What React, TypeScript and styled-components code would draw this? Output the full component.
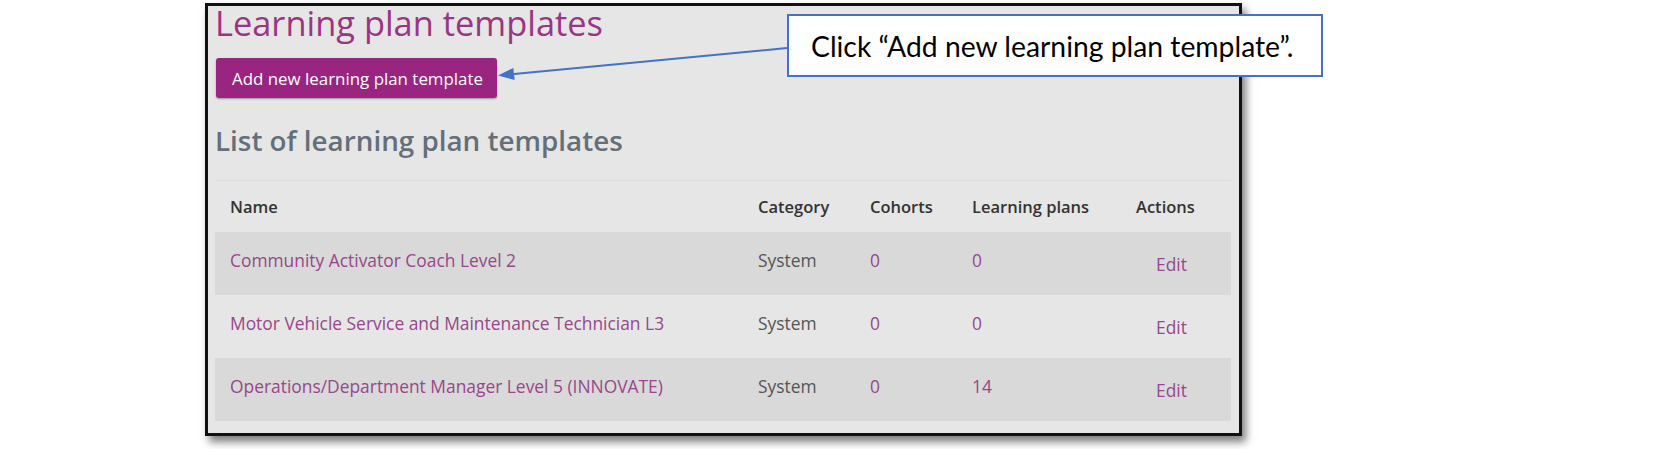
import React from "react";
import styled, { createGlobalStyle } from "styled-components";

const GlobalStyle = createGlobalStyle`
  html, body { margin: 0; padding: 0; background: #ffffff; }
  body { font-family: "Open Sans", "Noto Sans", sans-serif; }
`;

const COLUMNS = "528px 112px 102px 164px 110px";

const Page = styled.div`
  position: relative;
  width: 1654px;
  height: 449px;
  padding: 3px 0 0 205px;
  box-sizing: border-box;
  overflow: hidden;
`;

const Frame = styled.div`
  width: 1037px;
  box-sizing: border-box;
  border: 3px solid #111111;
  background: #e6e6e6;
  box-shadow: 4px 6px 8px rgba(0, 0, 0, 0.5);
  padding: 0 8px 12px 7px;
  display: flex;
  flex-direction: column;
  align-items: flex-start;
`;

const Title = styled.h1`
  margin: 0;
  font-family: "Open Sans", sans-serif;
  font-weight: 400;
  font-size: 34.4px;
  line-height: 34px;
  color: #9b3583;
`;

const PrimaryButton = styled.button`
  display: inline-flex;
  align-items: center;
  height: 40px;
  margin: 18px 0 0 1px;
  padding: 0 14px 0 16px;
  background: #9a2581;
  color: #ffffff;
  border: none;
  border-radius: 3px;
  font-family: "Open Sans", sans-serif;
  font-size: 16.9px;
  box-shadow: 0 1px 2px rgba(0, 0, 0, 0.35);
`;

const SectionHeading = styled.h2`
  margin: 25px 0 0;
  font-family: "Open Sans", sans-serif;
  font-weight: 600;
  font-size: 27.8px;
  line-height: 34px;
  color: #646f79;
`;

const Table = styled.div`
  margin-top: 23px;
  width: 1016px;
`;

const HeaderRow = styled.div`
  display: grid;
  grid-template-columns: ${COLUMNS};
  height: 52px;
  box-sizing: border-box;
  align-items: center;
  border-top: 1px solid #dedede;
`;

const HeaderCell = styled.div`
  padding-left: 15px;
  font-size: 16.5px;
  font-weight: 600;
  color: #333333;
  line-height: 24px;
`;

const Row = styled.div<{ $striped: boolean }>`
  display: grid;
  grid-template-columns: ${COLUMNS};
  height: 63px;
  align-items: start;
  background: ${(p) => (p.$striped ? "#d9d9d9" : "transparent")};
`;

const Cell = styled.div<{ $link?: boolean; $action?: boolean }>`
  padding-left: ${(p) => (p.$action ? "35px" : "15px")};
  padding-top: ${(p) => (p.$action ? "20px" : "16px")};
  font-size: 17.4px;
  line-height: 24px;
  color: ${(p) => (p.$link ? "#97478a" : "#555555")};
  white-space: nowrap;
`;

const ArrowLayer = styled.svg`
  position: absolute;
  left: 490px;
  top: 40px;
  width: 300px;
  height: 45px;
  overflow: visible;
`;

const Callout = styled.div`
  position: absolute;
  left: 787px;
  top: 14px;
  width: 536px;
  height: 63px;
  box-sizing: border-box;
  border: 2px solid #4472c4;
  background: #ffffff;
  display: flex;
  align-items: center;
  padding-left: 22px;
  font-family: Lato, "Liberation Sans", sans-serif;
  font-size: 28.3px;
  color: #000000;
`;

const rows = [
  { name: "Community Activator Coach Level 2", category: "System", cohorts: "0", plans: "0" },
  { name: "Motor Vehicle Service and Maintenance Technician L3", category: "System", cohorts: "0", plans: "0" },
  { name: "Operations/Department Manager Level 5 (INNOVATE)", category: "System", cohorts: "0", plans: "14" },
];

export default function App() {
  return (
    <>
      <GlobalStyle />
      <Page>
        <Frame>
          <Title>Learning plan templates</Title>
          <PrimaryButton>Add new learning plan template</PrimaryButton>
          <SectionHeading>List of learning plan templates</SectionHeading>
          <Table>
            <HeaderRow>
              <HeaderCell>Name</HeaderCell>
              <HeaderCell>Category</HeaderCell>
              <HeaderCell>Cohorts</HeaderCell>
              <HeaderCell>Learning plans</HeaderCell>
              <HeaderCell>Actions</HeaderCell>
            </HeaderRow>
            {rows.map((r, i) => (
              <Row key={r.name} $striped={i % 2 === 0}>
                <Cell $link>{r.name}</Cell>
                <Cell>{r.category}</Cell>
                <Cell $link>{r.cohorts}</Cell>
                <Cell $link>{r.plans}</Cell>
                <Cell $link $action>Edit</Cell>
              </Row>
            ))}
          </Table>
        </Frame>
        <ArrowLayer viewBox="0 0 300 45">
          <line x1="297" y1="8" x2="24" y2="34" stroke="#4472c4" strokeWidth="2" />
          <polygon points="8,35.5 23.3,28 24.7,40" fill="#4472c4" />
        </ArrowLayer>
        <Callout>Click “Add new learning plan template”.</Callout>
      </Page>
    </>
  );
}
